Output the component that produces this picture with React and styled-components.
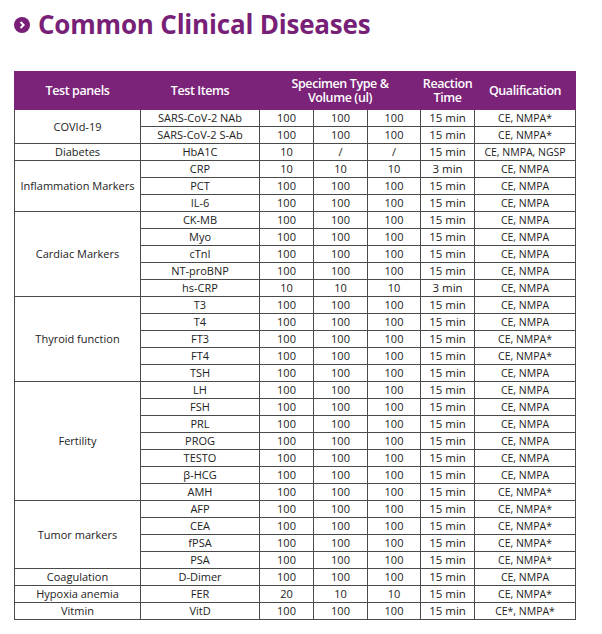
import React from "react";
import styled, { createGlobalStyle } from "styled-components";

const GlobalStyle = createGlobalStyle`
  body {
    margin: 0;
    background: #ffffff;
    font-family: "Open Sans", "Noto Sans", sans-serif;
  }
`;

const Page = styled.div`
  width: 602px;
  height: 634px;
  padding: 9px 0 0 14px;
  box-sizing: border-box;
`;

const Heading = styled.h1`
  margin: 0;
  display: flex;
  align-items: center;
  column-gap: 8px;
  font-family: "Open Sans", sans-serif;
  font-weight: 700;
  font-size: 26px;
  line-height: 30px;
  letter-spacing: -0.2px;
  color: #781f77;
`;

const Bullet = styled.span`
  width: 16px;
  height: 16px;
  border-radius: 50%;
  background: #781f77;
  display: flex;
  justify-content: center;
  align-items: center;
  margin-top: 1px;
`;

const Table = styled.table`
  margin-top: 32px;
  width: 561px;
  table-layout: fixed;
  border-collapse: collapse;
  font-family: "Open Sans", "Noto Sans", sans-serif;
  color: #222222;
`;

const HeadCell = styled.th`
  height: 37px;
  padding: 0;
  background: #7b2378;
  color: #ffffff;
  font-weight: 600;
  font-size: 12.5px;
  line-height: 14px;
  letter-spacing: -0.4px;
  text-align: center;
  border: 1px solid #7b2378;
  border-left-color: ${(props) => (props.first ? "#7b2378" : "#ffffff")};
`;

const Cell = styled.td`
  height: 16px;
  padding: 0;
  text-align: center;
  font-size: ${(props) => (props.small ? "10.5px" : props.time ? "11.5px" : "11px")};
  line-height: 14px;
  white-space: nowrap;
  border: 1px solid #4a4a4a;
`;

const groups = [
  {
    panel: "COVId-19",
    rows: [
      ["SARS-CoV-2 NAb", "100", "100", "100", "15 min", "CE, NMPA*"],
      ["SARS-CoV-2 S-Ab", "100", "100", "100", "15 min", "CE, NMPA*"],
    ],
  },
  { panel: "Diabetes", rows: [["HbA1C", "10", "/", "/", "15 min", "CE, NMPA, NGSP"]] },
  {
    panel: "Inflammation Markers",
    rows: [
      ["CRP", "10", "10", "10", "3 min", "CE, NMPA"],
      ["PCT", "100", "100", "100", "15 min", "CE, NMPA"],
      ["IL-6", "100", "100", "100", "15 min", "CE, NMPA"],
    ],
  },
  {
    panel: "Cardiac Markers",
    rows: [
      ["CK-MB", "100", "100", "100", "15 min", "CE, NMPA"],
      ["Myo", "100", "100", "100", "15 min", "CE, NMPA"],
      ["cTnI", "100", "100", "100", "15 min", "CE, NMPA"],
      ["NT-proBNP", "100", "100", "100", "15 min", "CE, NMPA"],
      ["hs-CRP", "10", "10", "10", "3 min", "CE, NMPA"],
    ],
  },
  {
    panel: "Thyroid function",
    rows: [
      ["T3", "100", "100", "100", "15 min", "CE, NMPA"],
      ["T4", "100", "100", "100", "15 min", "CE, NMPA"],
      ["FT3", "100", "100", "100", "15 min", "CE, NMPA*"],
      ["FT4", "100", "100", "100", "15 min", "CE, NMPA*"],
      ["TSH", "100", "100", "100", "15 min", "CE, NMPA"],
    ],
  },
  {
    panel: "Fertility",
    rows: [
      ["LH", "100", "100", "100", "15 min", "CE, NMPA"],
      ["FSH", "100", "100", "100", "15 min", "CE, NMPA"],
      ["PRL", "100", "100", "100", "15 min", "CE, NMPA"],
      ["PROG", "100", "100", "100", "15 min", "CE, NMPA"],
      ["TESTO", "100", "100", "100", "15 min", "CE, NMPA"],
      ["β-HCG", "100", "100", "100", "15 min", "CE, NMPA"],
      ["AMH", "100", "100", "100", "15 min", "CE, NMPA*"],
    ],
  },
  {
    panel: "Tumor markers",
    rows: [
      ["AFP", "100", "100", "100", "15 min", "CE, NMPA*"],
      ["CEA", "100", "100", "100", "15 min", "CE, NMPA*"],
      ["fPSA", "100", "100", "100", "15 min", "CE, NMPA*"],
      ["PSA", "100", "100", "100", "15 min", "CE, NMPA*"],
    ],
  },
  { panel: "Coagulation", rows: [["D-Dimer", "100", "100", "100", "15 min", "CE, NMPA"]] },
  { panel: "Hypoxia anemia", rows: [["FER", "20", "10", "10", "15 min", "CE, NMPA*"]] },
  { panel: "Vitmin", rows: [["VitD", "100", "100", "100", "15 min", "CE*, NMPA*"]] },
];

class App extends React.Component {
  render() {
    return (
      <Page>
        <GlobalStyle />
        <Heading>
          <Bullet>
            <svg width="10" height="10" viewBox="0 0 10 10">
              <path d="M3.6 2 L6.6 5 L3.6 8" fill="none" stroke="#ffffff" strokeWidth="2" />
            </svg>
          </Bullet>
          Common Clinical Diseases
        </Heading>
        <Table>
          <colgroup>
            <col style={{ width: 126 }} />
            <col style={{ width: 119 }} />
            <col style={{ width: 54 }} />
            <col style={{ width: 54 }} />
            <col style={{ width: 53 }} />
            <col style={{ width: 54 }} />
            <col style={{ width: 101 }} />
          </colgroup>
          <thead>
            <tr>
              <HeadCell first>Test panels</HeadCell>
              <HeadCell>Test Items</HeadCell>
              <HeadCell colSpan={3}>
                Specimen Type &amp;
                <br />
                Volume (ul)
              </HeadCell>
              <HeadCell>
                Reaction
                <br />
                Time
              </HeadCell>
              <HeadCell>Qualification</HeadCell>
            </tr>
          </thead>
          <tbody>
            {groups.map((group) =>
              group.rows.map((row, i) => (
                <tr key={group.panel + row[0]}>
                  {i === 0 && <Cell rowSpan={group.rows.length}>{group.panel}</Cell>}
                  <Cell>{row[0]}</Cell>
                  <Cell>{row[1]}</Cell>
                  <Cell>{row[2]}</Cell>
                  <Cell>{row[3]}</Cell>
                  <Cell time>{row[4]}</Cell>
                  <Cell small>{row[5]}</Cell>
                </tr>
              ))
            )}
          </tbody>
        </Table>
      </Page>
    );
  }
}

export default App;
